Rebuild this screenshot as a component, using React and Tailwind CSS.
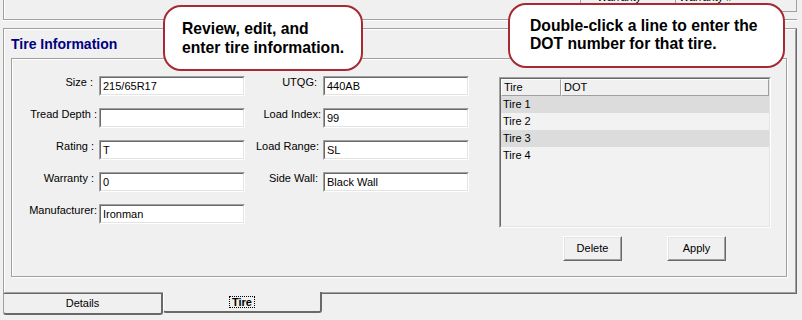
function Sunken({ className = '', children }) {
  return (
    <div className={`border border-t-[#a0a0a0] border-l-[#a0a0a0] border-r-white border-b-white ${className}`}>
      <div className="h-full border border-t-[#696969] border-l-[#696969] border-r-[#e3e3e3] border-b-[#e3e3e3]">
        {children}
      </div>
    </div>
  );
}

function Raised({ className = '', children }) {
  return (
    <div className={`border border-t-white border-l-white border-r-[#696969] border-b-[#696969] ${className}`}>
      <div className="flex h-full items-center justify-center border border-t-[#e3e3e3] border-l-[#e3e3e3] border-r-[#a0a0a0] border-b-[#a0a0a0] bg-[#f0f0f0]">
        {children}
      </div>
    </div>
  );
}

function TextBox({ value }) {
  return (
    <Sunken className="h-[20px] w-[146px]">
      <div className="flex h-full items-center bg-white px-[2px] leading-[13px]">{value}</div>
    </Sunken>
  );
}

function Field({ label, value, labelClass }) {
  return (
    <div className="flex h-[20px]">
      <div className={`text-right leading-[13px] ${labelClass}`}>{label}</div>
      <TextBox value={value} />
    </div>
  );
}

const tires = ['Tire 1', 'Tire 2', 'Tire 3', 'Tire 4'];

export default function App() {
  return (
    <div className="relative h-[320px] w-[802px] overflow-hidden bg-[#f0f0f0] font-['Liberation_Sans',Arial,sans-serif] text-[11px] text-black">
      {/* upper panel, mostly scrolled out of view */}
      <div className="ml-[3px] flex h-[20px] w-[794px] justify-end border-b border-l border-[#a0a0a0] shadow-[0_1px_0_#fff,inset_1px_0_0_#fff]">
        <div className="flex h-[12px] w-[217px] overflow-hidden border-b border-l border-r border-[#a0a0a0]">
          <div className="w-[95px] border-r border-[#a0a0a0] pl-[16px] -mt-[9px] leading-[13px]">Warranty</div>
          <div className="flex-1 pl-[3px] -mt-[9px] leading-[13px]">Warranty #</div>
        </div>
      </div>

      {/* tab page */}
      <div className="ml-[3px] mt-[8px] h-[266px] w-[794px] border border-t-[#a0a0a0] border-l-[#a0a0a0] border-r-[#696969] border-b-[#696969]">
        <div className="h-full border border-t-white border-l-white border-r-[#a0a0a0] border-b-[#a0a0a0] pl-[6px]">
          <div className="mt-[6px] text-[14px] font-bold leading-[16px] text-[#000080]">Tire Information</div>
          <div className="mt-[6px] h-[219px] w-[776px] border border-[#a0a0a0] shadow-[1px_1px_0_#fff,inset_1px_1px_0_#fff]">
            <div className="flex pt-[17px]">
              <div className="flex flex-col gap-[12px]">
                <Field label="Size :" value="215/65R17" labelClass="w-[87px] pr-[6px]" />
                <Field label="Tread Depth :" value="" labelClass="w-[87px] pr-[2px]" />
                <Field label="Rating :" value="T" labelClass="w-[87px] pr-[5px]" />
                <Field label="Warranty :" value="0" labelClass="w-[87px] pr-[5px]" />
                <Field label="Manufacturer:" value="Ironman" labelClass="w-[87px] pr-[2px]" />
              </div>
              <div className="flex flex-col gap-[12px]">
                <Field label="UTQG:" value="440AB" labelClass="w-[78px] pr-[6px]" />
                <Field label="Load Index:" value="99" labelClass="w-[78px] pr-[2px]" />
                <Field label="Load Range:" value="SL" labelClass="w-[78px] pr-[4px]" />
                <Field label="Side Wall:" value="Black Wall" labelClass="w-[78px] pr-[5px]" />
              </div>
              <div className="ml-[30px] mt-[1px]">
                <Sunken className="h-[151px] w-[272px]">
                  <div className="h-full bg-[#f2f2f2] leading-[13px]">
                    <div className="flex h-[17px]">
                      <div className="flex w-[60px] items-center border border-t-white border-l-white border-r-[#a0a0a0] border-b-[#a0a0a0] bg-[#f0f0f0] pl-[2px]">Tire</div>
                      <div className="flex flex-1 items-center border border-t-white border-l-white border-r-[#a0a0a0] border-b-[#a0a0a0] bg-[#f0f0f0] pl-[2px]">DOT</div>
                    </div>
                    {tires.map((t, i) => (
                      <div key={t} className={`flex h-[17px] items-center pl-[2px] ${i % 2 === 0 ? 'bg-[#dcdcdc]' : ''}`}>
                        {t}
                      </div>
                    ))}
                  </div>
                </Sunken>
                <div className="mt-[8px] flex pl-[64px] leading-[13px]">
                  <Raised className="h-[25px] w-[59px]">Delete</Raised>
                  <Raised className="ml-[45px] h-[25px] w-[59px]">Apply</Raised>
                </div>
              </div>
            </div>
          </div>
        </div>
      </div>

      {/* tabs along the bottom */}
      <div className="relative flex leading-[13px]">
        <div className="ml-[3px] flex h-[21px] w-[160px] items-center justify-center rounded-b-[3px] border-b-2 border-l border-r-2 border-b-[#696969] border-l-[#a0a0a0] border-r-[#696969]">
          Details
        </div>
        <div className="-mt-[2px] flex h-[21px] w-[159px] items-center justify-center rounded-b-[3px] border-b-2 border-l border-r-2 border-b-[#696969] border-l-white border-r-[#696969] bg-[#f0f0f0]">
          <span className="border border-dotted border-black px-[2px] font-bold leading-[10px]">Tire</span>
        </div>
      </div>

      {/* callouts */}
      <div className="absolute left-[163px] top-[5px] h-[66px] w-[200px] rounded-[18px] border-2 border-[#a52a32] bg-white pl-[17px] pt-[12px] text-[15.7px] font-bold leading-[19px] whitespace-nowrap">
        Review, edit, and
        <br />
        enter tire information.
      </div>
      <div className="absolute left-[508px] top-[3px] h-[65px] w-[277px] rounded-[18px] border-2 border-[#a52a32] bg-white pl-[20px] pt-[12px] text-[15.7px] font-bold leading-[18px] whitespace-nowrap">
        Double-click a line to enter the
        <br />
        DOT number for that tire.
      </div>
    </div>
  );
}
